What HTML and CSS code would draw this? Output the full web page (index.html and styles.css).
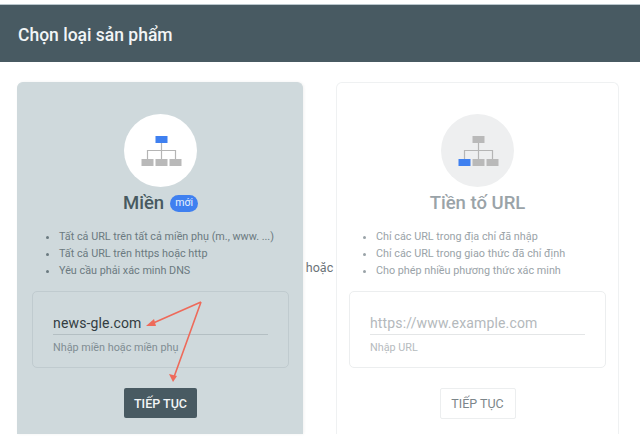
FILE: index.html
```html
<!DOCTYPE html>
<html lang="vi">
<head>
  <meta charset="UTF-8">
  <meta name="viewport" content="width=device-width, initial-scale=1">
  <title>Chọn loại sản phẩm</title>
  <link rel="stylesheet" href="styles.css">
</head>
<body>
  <div class="header">Chọn loại sản phẩm</div>

  <div class="choices">
    <div class="card selected">
      <div class="circle">
        <svg width="44" height="32" viewBox="0 0 44 32">
          <rect x="16.5" y="0" width="12" height="7" fill="#3f80f0"/>
          <path d="M22.5 7V23M8.5 23V14.5H36.5V23" fill="none" stroke="#b5b5b5" stroke-width="1.2"/>
          <rect x="2.5" y="23" width="12" height="7" fill="#b9b9b9"/>
          <rect x="16.5" y="23" width="12" height="7" fill="#b9b9b9"/>
          <rect x="30.5" y="23" width="12" height="7" fill="#b9b9b9"/>
        </svg>
      </div>
      <div class="title">Miền <span class="badge">mới</span></div>
      <ul>
        <li>Tất cả URL trên tất cả miền phụ (m., www. ...)</li>
        <li>Tất cả URL trên https hoặc http</li>
        <li>Yêu cầu phải xác minh DNS</li>
      </ul>
      <div class="field">
        <div class="value">news-gle.com</div>
        <div class="hint">Nhập miền hoặc miền phụ</div>
      </div>
      <button class="next">TIẾP TỤC</button>
      <svg class="arrows" width="70" height="92" viewBox="0 0 70 92">
        <path d="M61 3L11 25M61 3L34 78" fill="none" stroke="#ee6a5a" stroke-width="1.6"/>
        <path d="M6 27L14 20L16 27Z" fill="#ee6a5a"/>
        <path d="M33 83L29 75L37 77Z" fill="#ee6a5a"/>
      </svg>
    </div>

    <div class="or">hoặc</div>

    <div class="card">
      <div class="circle">
        <svg width="44" height="32" viewBox="0 0 44 32">
          <rect x="16.5" y="0" width="12" height="7" fill="#b9b9b9"/>
          <path d="M22.5 7V23M8.5 23V14.5H36.5V23" fill="none" stroke="#b5b5b5" stroke-width="1.2"/>
          <rect x="2.5" y="23" width="12" height="7" fill="#3f80f0"/>
          <rect x="16.5" y="23" width="12" height="7" fill="#b9b9b9"/>
          <rect x="30.5" y="23" width="12" height="7" fill="#b9b9b9"/>
        </svg>
      </div>
      <div class="title">Tiền tố URL</div>
      <ul>
        <li>Chỉ các URL trong địa chỉ đã nhập</li>
        <li>Chỉ các URL trong giao thức đã chỉ định</li>
        <li>Cho phép nhiều phương thức xác minh</li>
      </ul>
      <div class="field">
        <div class="value">https://www.example.com</div>
        <div class="hint">Nhập URL</div>
      </div>
      <button class="next">TIẾP TỤC</button>
    </div>
  </div>
</body>
</html>
```

FILE: styles.css
```css
* { box-sizing: border-box; }
html, body { height: 100%; }
body {
  margin: 0;
  overflow: hidden;
  background: white;
  font-family: Roboto, "Noto Sans", sans-serif;
  border-top: 4px solid #fff;
}
.header {
  height: 58px;
  padding: 2px 18px 0;
  display: flex;
  align-items: center;
  background: #485a62;
  border-top: 1px solid #b9c6cc;
  color: #f2f5f6;
  font-size: 17.5px;
  font-weight: 500;
}
.choices {
  display: flex;
  align-items: flex-start;
  padding: 20px 0 0 17px;
}
.card {
  position: relative;
  width: 283px;
  height: 352px;
  padding: 31px 12px 0;
  display: flex;
  flex-direction: column;
  align-items: center;
  border: 1px solid #eff1f2;
  border-radius: 6px;
  border-bottom: 0;
  border-bottom-left-radius: 0;
  border-bottom-right-radius: 0;
}
.card.selected {
  width: 286px;
  padding: 31px 13px 0 14px;
  background: #cfd9dc;
  border-color: #cfd9dc;
  box-shadow: 1px 0 3px rgba(0,0,0,0.06);
}
.circle {
  width: 73px;
  height: 73px;
  flex: none;
  display: flex;
  align-items: center;
  justify-content: center;
  border-radius: 50%;
  background: #eeeff0;
}
.circle svg { margin-top: 3px; }
.selected .circle { background: #fff; }
.title {
  margin-top: 3px;
  height: 26px;
  display: flex;
  align-items: center;
  gap: 6px;
  font-size: 18.5px;
  font-weight: 500;
  color: #9aa3a8;
}
.selected .title { color: #475960; }
.badge {
  padding: 1px 5px 3px;
  border-radius: 9px;
  background: #3f80f0;
  color: #e8f0fe;
  font-size: 10.5px;
  font-weight: 400;
}
ul {
  align-self: stretch;
  margin: 12px 0 0;
  padding: 0 0 0 27px;
  font-size: 10.8px;
  line-height: 17px;
  color: #9aa3a8;
}
.selected ul { color: #6b7a80; }
.field {
  align-self: stretch;
  height: 77px;
  margin-top: 12px;
  padding: 23px 20px 0;
  border: 1px solid #eceeef;
  border-radius: 5px;
}
.selected .field { border-color: #c0cbcf; }
.value {
  height: 20px;
  border-bottom: 1px solid #e4e6e7;
  font-size: 14px;
  letter-spacing: 0.15px;
  color: #b4b9bc;
}
.selected .value { color: #333d42; border-color: #b4bfc3; }
.hint {
  margin-top: 6px;
  font-size: 10.8px;
  color: #b6bbbe;
}
.selected .hint { color: #7f8d93; }
.next {
  width: 76px;
  height: 31px;
  margin-top: 20px;
  padding: 0;
  border: 1px solid #eceeef;
  border-radius: 2px;
  background: #fff;
  color: #7b858a;
  font-family: inherit;
  font-size: 12.5px;
  font-weight: 400;
}
.selected .next {
  width: 73px;
  height: 30px;
  border: 0;
  background: #485a62;
  color: #f2f5f6;
  font-weight: 500;
}
.arrows {
  position: absolute;
  left: 122px;
  top: 216px;
}
.or {
  width: 33px;
  margin-top: 178px;
  font-size: 12.5px;
  color: #6b7378;
  text-align: center;
}
```
